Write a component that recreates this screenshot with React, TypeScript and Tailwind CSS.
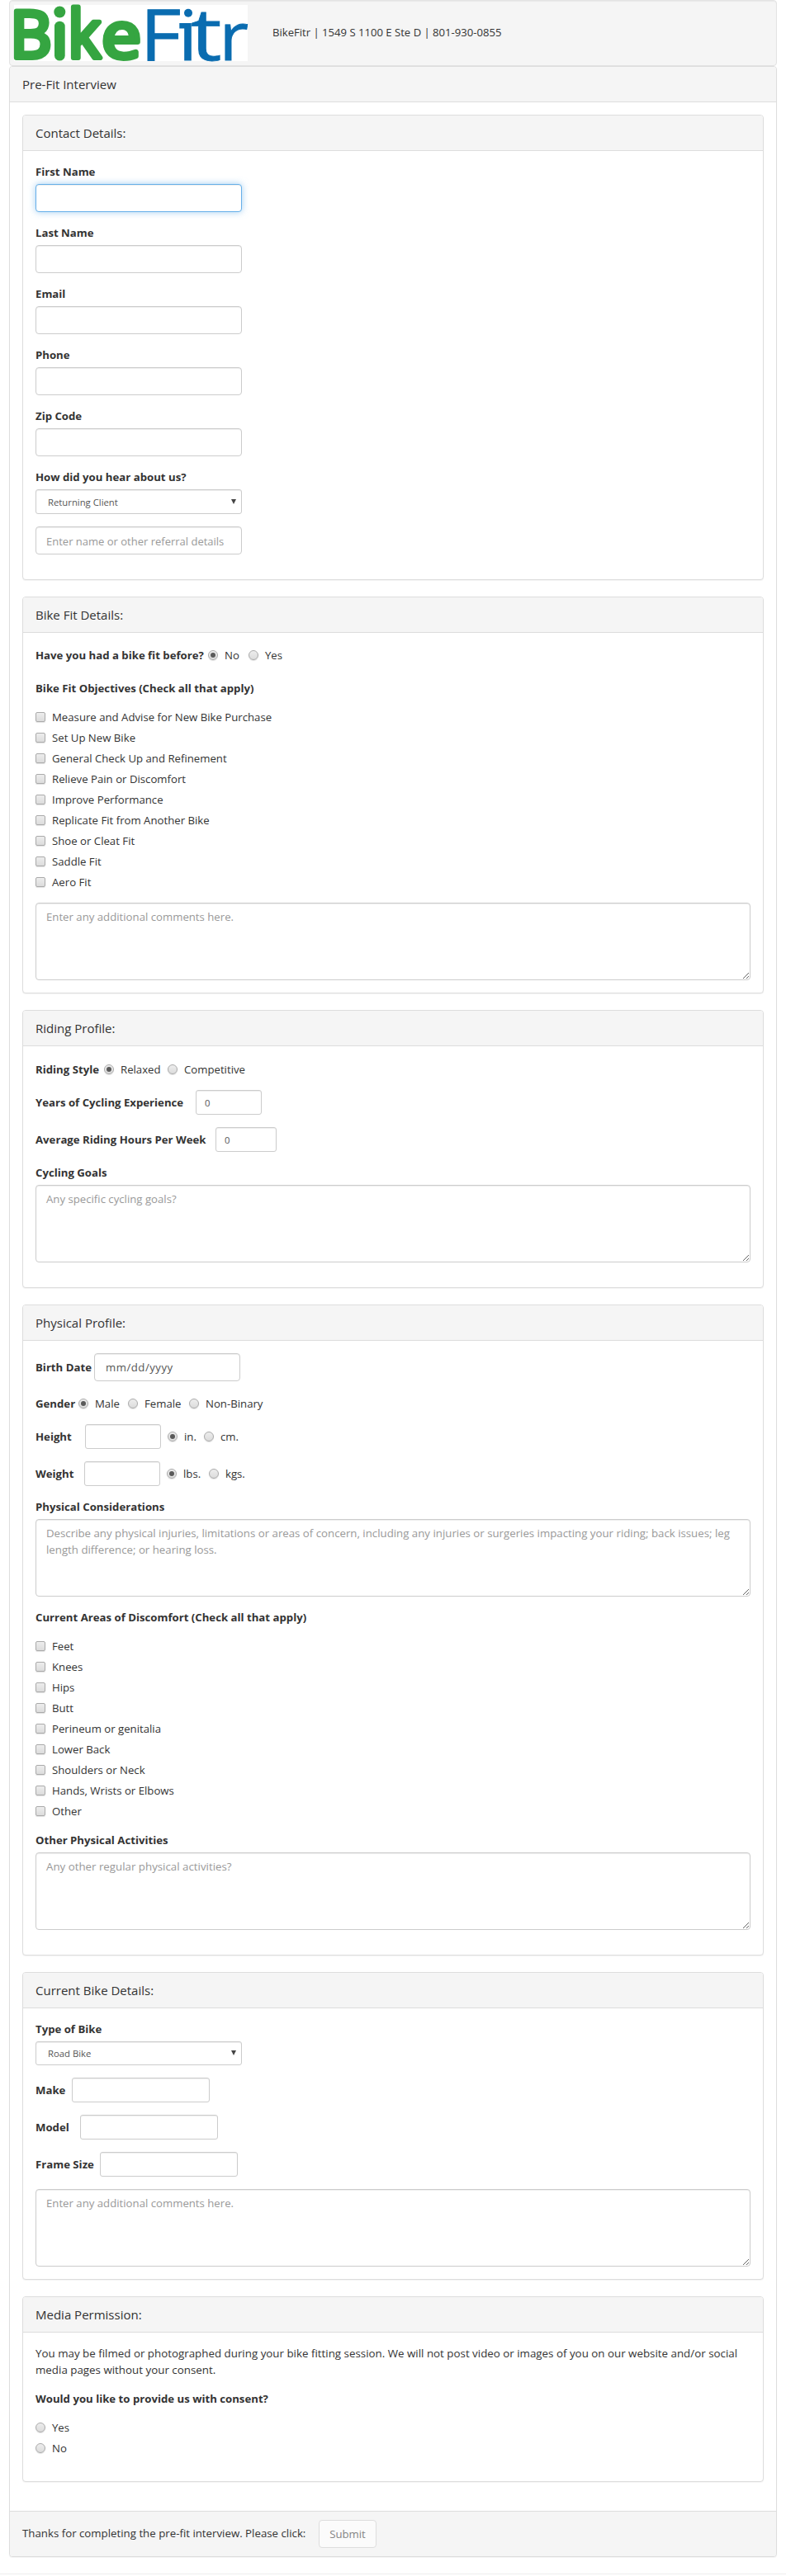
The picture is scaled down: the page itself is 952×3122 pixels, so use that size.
import type { ReactNode } from "react";
import clsx from "clsx";

const shadow = "shadow-[inset_0_1px_1px_rgba(0,0,0,0.075)]";

function Logo() {
  return (
    <svg width="283" height="68" viewBox="0 0 283 68" className="block overflow-visible bg-white" fontFamily="'Open Sans', sans-serif">
      <g fill="#35a541" stroke="#35a541" strokeWidth="6" strokeLinejoin="round" strokeLinecap="round">
        <text x="-4.7" y="64" fontSize="78">B</text>
        <text x="65.2" y="64" fontSize="80" textLength="39.9" lengthAdjust="spacingAndGlyphs">k</text>
        <text x="106" y="63.5" fontSize="77" textLength="48" lengthAdjust="spacingAndGlyphs">e</text>
      </g>
      <circle cx="55.3" cy="8.5" r="7" fill="#35a541" />
      <rect x="49" y="19.7" width="12.7" height="47.8" rx="6.3" fill="#35a541" />
      <g fill="#0a6cb0" stroke="#0a6cb0" strokeWidth="0.8" fontSize="86">
        <text x="152.5" y="67" textLength="50" lengthAdjust="spacingAndGlyphs">F</text>
        <text x="214" y="67" fontSize="87" textLength="37.5" lengthAdjust="spacingAndGlyphs">t</text>
        <text x="248.5" y="67" fontSize="80" textLength="35.5" lengthAdjust="spacingAndGlyphs">r</text>
      </g>
      <circle cx="211" cy="9.7" r="5" fill="#0a6cb0" />
      <rect x="206.2" y="22" width="8.6" height="45.5" fill="#0a6cb0" />
      <rect x="200.3" y="22" width="8" height="6.5" fill="#0a6cb0" />
    </svg>
  );
}

function Panel({ title, children, className }: { title: string; children: ReactNode; className?: string }) {
  return (
    <section className="mb-5 rounded border border-[#ddd] bg-white shadow-[0_1px_1px_rgba(0,0,0,0.05)]">
      <h2 className="h-[43px] rounded-t-[3px] border-b border-[#ddd] bg-[#f5f5f5] px-[15px] py-[10px] text-[15px] leading-[22px]">{title}</h2>
      <div className={clsx("px-[15px] pt-[15px]", className)}>{children}</div>
    </section>
  );
}

function Label({ children, className }: { children: ReactNode; className?: string }) {
  return <label className={clsx("block shrink-0 whitespace-nowrap font-bold", className)}>{children}</label>;
}

function Input({ className, ...rest }: React.InputHTMLAttributes<HTMLInputElement>) {
  return <input {...rest} className={clsx("block border bg-white text-[#555] outline-none placeholder:text-[#999]", className)} />;
}

function TextField({ label, focused }: { label: string; focused?: boolean }) {
  return (
    <div className="mb-[15px]">
      <Label className="mb-[5px]">{label}</Label>
      <Input
        className={clsx(
          "h-[34px] w-[250px] rounded px-3",
          focused ? "border-[#66afe9] shadow-[inset_0_1px_1px_rgba(0,0,0,0.075),0_0_8px_rgba(102,175,233,0.6)]" : "border-[#ccc] shadow-[inset_0_1px_1px_rgba(0,0,0,0.075)]",
        )}
      />
    </div>
  );
}

function SmallInput({ className, value }: { className: string; value?: string }) {
  return <Input defaultValue={value} className={clsx("h-[30px] rounded-[3px] border-[#ccc] px-[10px] text-[11.3px]", shadow, className)} />;
}

function Select({ value, className }: { value: string; className: string }) {
  return (
    <button type="button" className={clsx("flex w-[250px] items-center justify-between rounded-[3px] border border-[#ccc] bg-white pr-[6px] pl-[14px] text-[11.3px] text-[#555]", shadow, className)}>
      <span className="pt-px">{value}</span>
      <svg width="6" height="6" viewBox="0 0 6 6" className="mb-px"><path d="M0 0h6L3 6z" fill="#444" /></svg>
    </button>
  );
}

function Area({ text, className }: { text: string; className?: string }) {
  return (
    <textarea
      placeholder={text}
      className={clsx("block h-[94px] w-full resize-y overflow-auto rounded border border-[#ccc] bg-white px-3 py-[6px] outline-none placeholder:text-[#999]", shadow, className)}
    />
  );
}

const control = "size-3 shrink-0 border border-[#aaa] bg-linear-to-b from-[#ededed] to-[#dcdcdc] shadow-[0_1px_1px_rgba(0,0,0,0.12)]";

function Radio({ on }: { on?: boolean }) {
  return (
    <span role="radio" aria-checked={!!on} className={clsx("flex items-center justify-center rounded-full", control)}>
      {on && <span className="size-[6px] rounded-full bg-[#5a5a5a]" />}
    </span>
  );
}

function Option({ label, on, className }: { label: string; on?: boolean; className?: string }) {
  return (
    <span className={clsx("flex shrink-0 items-center gap-2 whitespace-nowrap", className)}>
      <Radio on={on} />
      <span>{label}</span>
    </span>
  );
}

function Checks({ items }: { items: string[] }) {
  return (
    <div className="mb-[15px] flex flex-col gap-[5px]">
      {items.map((t) => (
        <div key={t} className="flex items-center gap-2">
          <span role="checkbox" aria-checked="false" className={clsx("rounded-[2px]", control)} />
          <span>{t}</span>
        </div>
      ))}
    </div>
  );
}

const row = "mb-[15px] flex items-center";

export default function App() {
  return (
    <div className="h-[3122px] bg-white font-['Open_Sans',sans-serif] text-[13.2px] leading-5 text-[#333]">
      <div className="mr-[11px] ml-[11px]">
        <header className="flex h-20 items-start rounded border border-[#e3e3e3] bg-[#f5f5f5] pt-[5px] pl-[5px] shadow-[inset_0_1px_1px_rgba(0,0,0,0.05)]">
          <Logo />
          <div className="mt-[23px] ml-[30px] text-[13.1px]">BikeFitr | 1549 S 1100 E Ste D | 801-930-0855</div>
        </header>
        <main className="rounded border border-[#ddd] bg-white shadow-[0_1px_1px_rgba(0,0,0,0.05)]">
          <h1 className="h-[43px] rounded-t-[3px] border-b border-[#ddd] bg-[#f5f5f5] px-[15px] py-[10px] text-[15px] leading-[22px]">Pre-Fit Interview</h1>
          <div className="p-[15px]">
            <Panel title="Contact Details:" className="pb-[30px]">
              <TextField label="First Name" focused />
              <TextField label="Last Name" />
              <TextField label="Email" />
              <TextField label="Phone" />
              <TextField label="Zip Code" />
              <Label className="mb-[5px]">How did you hear about us?</Label>
              <Select value="Returning Client" className="mb-[15px] h-[30px]" />
              <Input placeholder="Enter name or other referral details" className={clsx("h-[34px] w-[250px] rounded border-[#ccc] px-3 pt-px text-[13px]", shadow)} />
            </Panel>

            <Panel title="Bike Fit Details:" className="pb-[15px]">
              <div className="mb-5 flex items-center pt-[2px]">
                <Label className="w-[209px]">Have you had a bike fit before?</Label>
                <Option label="No" on className="w-[49px]" />
                <Option label="Yes" />
              </div>
              <Label className="mb-[15px]">Bike Fit Objectives (Check all that apply)</Label>
              <Checks items={["Measure and Advise for New Bike Purchase", "Set Up New Bike", "General Check Up and Refinement", "Relieve Pain or Discomfort", "Improve Performance", "Replicate Fit from Another Bike", "Shoe or Cleat Fit", "Saddle Fit", "Aero Fit"]} />
              <Area text="Enter any additional comments here." />
            </Panel>

            <Panel title="Riding Profile:" className="pb-[30px]">
              <div className="mb-[15px] flex items-center pt-[3px]">
                <Label className="w-[83px]">Riding Style</Label>
                <Option label="Relaxed" on className="w-[77px]" />
                <Option label="Competitive" />
              </div>
              <div className={row}>
                <Label className="w-[194px]">Years of Cycling Experience</Label>
                <SmallInput value="0" className="w-20" />
              </div>
              <div className={row}>
                <Label className="w-[218px]">Average Riding Hours Per Week</Label>
                <SmallInput value="0" className="w-[74px]" />
              </div>
              <Label className="mb-[5px]">Cycling Goals</Label>
              <Area text="Any specific cycling goals?" />
            </Panel>

            <Panel title="Physical Profile:" className="pb-[30px]">
              <div className="mb-[17px] flex items-center">
                <Label className="w-[71px]">Birth Date</Label>
                <Input defaultValue="mm/dd/yyyy" className={clsx("h-[34px] w-[177px] rounded border-[#ccc] px-[13px] tracking-[0.5px]", shadow)} />
              </div>
              <div className={row}>
                <Label className="w-[52px]">Gender</Label>
                <Option label="Male" on className="w-[60px]" />
                <Option label="Female" className="w-[74px]" />
                <Option label="Non-Binary" />
              </div>
              <div className={row}>
                <Label className="w-[60px]">Height</Label>
                <SmallInput className="mr-2 w-[92px]" />
                <Option label="in." on className="w-[44px]" />
                <Option label="cm." />
              </div>
              <div className={row}>
                <Label className="w-[59px]">Weight</Label>
                <SmallInput className="mr-2 w-[92px]" />
                <Option label="lbs." on className="w-[51px]" />
                <Option label="kgs." />
              </div>
              <Label className="mb-[5px]">Physical Considerations</Label>
              <Area
                text={"Describe any physical injuries, limitations or areas of concern, including any injuries or surgeries impacting your riding; back issues; leg\nlength difference; or hearing loss."}
                className="mb-[15px] text-[13.25px]"
              />
              <Label className="mb-[15px]">Current Areas of Discomfort (Check all that apply)</Label>
              <Checks items={["Feet", "Knees", "Hips", "Butt", "Perineum or genitalia", "Lower Back", "Shoulders or Neck", "Hands, Wrists or Elbows", "Other"]} />
              <Label className="mb-[5px]">Other Physical Activities</Label>
              <Area text="Any other regular physical activities?" className="text-[13.3px]" />
            </Panel>

            <Panel title="Current Bike Details:" className="pb-[15px]">
              <Label className="mb-[5px]">Type of Bike</Label>
              <Select value="Road Bike" className="mb-[15px] h-[29px]" />
              <div className={row}>
                <Label className="w-[44px]">Make</Label>
                <SmallInput className="w-[167px]" />
              </div>
              <div className={row}>
                <Label className="w-[54px]">Model</Label>
                <SmallInput className="w-[167px]" />
              </div>
              <div className={row}>
                <Label className="w-[78px]">Frame Size</Label>
                <SmallInput className="w-[167px]" />
              </div>
              <Area text="Enter any additional comments here." />
            </Panel>

            <Panel title="Media Permission:" className="pb-[30px]">
              <p className="mb-[15px] text-[13.35px]">
                You may be filmed or photographed during your bike fitting session. We will not post video or images of you on our website and/or social
                <br />
                media pages without your consent.
              </p>
              <Label className="mb-[15px]">Would you like to provide us with consent?</Label>
              <div className="flex flex-col gap-[5px]">
                <Option label="Yes" />
                <Option label="No" />
              </div>
            </Panel>
          </div>
          <footer className="flex h-[55px] items-start rounded-b-[3px] border-t border-[#ddd] bg-[#f5f5f5] px-[15px] pt-[10px]">
            <span className="mt-[6px] w-[359px] text-[13.27px]">Thanks for completing the pre-fit interview. Please click:</span>
            <button type="button" disabled className="h-[34px] w-[70px] rounded border border-[#ddd] bg-[#fbfbfb] text-[#858585]">Submit</button>
          </footer>
        </main>
      </div>
      <div className="mt-5 h-px bg-[#eee]" />
    </div>
  );
}
